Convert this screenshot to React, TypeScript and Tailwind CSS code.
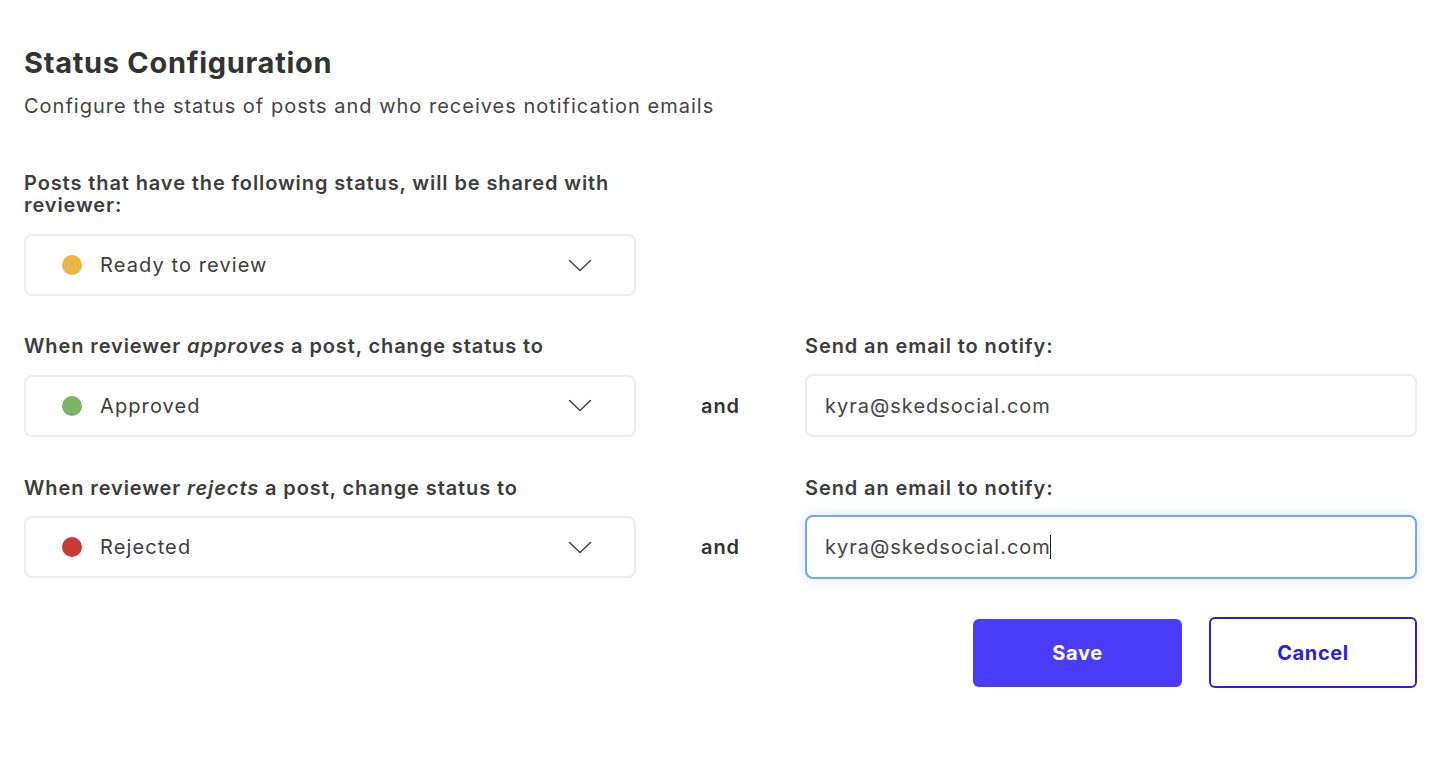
import React from "react";

const Chevron = () => (
  <svg width="24" height="13" viewBox="0 0 24 13" fill="none" className="shrink-0">
    <path d="M1.5 1.5 L12 11.5 L22.5 1.5" stroke="#4a4a4a" strokeWidth="1.6" strokeLinecap="round" strokeLinejoin="round" />
  </svg>
);

const Select = ({ color, label }: { color: string; label: string }) => (
  <div className="flex h-[62px] items-center rounded-[8px] border-2 border-[#ededed] bg-white pl-[36px] pr-[42px]">
    <span className={`h-[20px] w-[20px] shrink-0 rounded-full ${color}`} />
    <span className="ml-[18px] flex-1 text-[20px] tracking-[1.1px] text-[#3d3d3d]">{label}</span>
    <Chevron />
  </div>
);

const Label = ({ children }: { children: React.ReactNode }) => (
  <div className="text-[20px] font-semibold leading-[24px] tracking-[0.9px] text-[#3d3d3d]">{children}</div>
);

export default function App() {
  return (
    <div className="min-h-screen bg-white pl-[24px] pt-[44px] text-[#3a3a3a]" style={{ fontFamily: "Inter, 'Noto Sans', sans-serif" }}>
      <h1 className="text-[29px] font-bold leading-[38px] tracking-[0.7px] text-[#333]">Status Configuration</h1>
      <p className="mt-[11px] text-[20px] leading-[26px] tracking-[1px] text-[#444]">
        Configure the status of posts and who receives notification emails
      </p>

      <div className="mt-[53px] w-[612px]">
        <div className="text-[20px] font-semibold leading-[22px] tracking-[0.9px] text-[#3d3d3d]">
          Posts that have the following status, will be shared with
          <br />
          reviewer:
        </div>
        <div className="mt-[18px]">
          <Select color="bg-[#ebb545]" label="Ready to review" />
        </div>
      </div>

      <div className="mt-[38px] grid w-[1393px] grid-cols-[612px_169px_612px]">
        <Label>
          When reviewer <em className="font-semibold">approves</em> a post, change status to
        </Label>
        <div />
        <Label>Send an email to notify:</Label>
      </div>
      <div className="mt-[16px] grid w-[1393px] grid-cols-[612px_169px_612px] items-center">
        <Select color="bg-[#7bb466]" label="Approved" />
        <div className="text-center text-[20px] font-semibold tracking-[1px] text-[#333]">and</div>
        <div className="flex h-[63px] items-center rounded-[8px] border-2 border-[#ededed] bg-white px-[18px] text-[20px] tracking-[1px] text-[#444]">
          kyra@skedsocial.com
        </div>
      </div>

      <div className="mt-[39px] grid w-[1393px] grid-cols-[612px_169px_612px]">
        <Label>
          When reviewer <em className="font-semibold">rejects</em> a post, change status to
        </Label>
        <div />
        <Label>Send an email to notify:</Label>
      </div>
      <div className="mt-[15px] grid w-[1393px] grid-cols-[612px_169px_612px] items-center">
        <Select color="bg-[#c73b37]" label="Rejected" />
        <div className="text-center text-[20px] font-semibold tracking-[1px] text-[#333]">and</div>
        <div className="flex h-[64px] items-center rounded-[8px] border-2 border-[#74a9e5] bg-white px-[18px] text-[20px] tracking-[1px] text-[#444] shadow-[0_0_8px_2px_rgba(116,169,229,0.22)]">
          kyra@skedsocial.com<span className="-ml-[1px] inline-block h-[24px] w-[1.5px] bg-[#222]" />
        </div>
      </div>

      <div className="mt-[38px] flex w-[1393px] items-center justify-end gap-[27px]">
        <button className="h-[68px] w-[209px] rounded-[6px] bg-[#4a3cf6] text-[20px] font-bold tracking-[0.6px] text-white">Save</button>
        <button className="h-[71px] w-[208px] rounded-[6px] border-2 border-[#2c1edb] bg-white text-[20px] font-bold tracking-[0.6px] text-[#2c1edb]">Cancel</button>
      </div>
    </div>
  );
}
